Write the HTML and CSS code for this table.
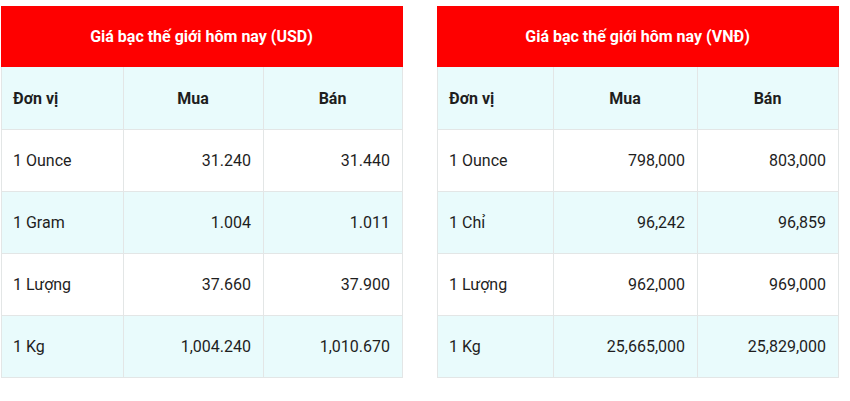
FILE: index.html
```html
<!DOCTYPE html>
<html lang="vi">
<head>
<meta charset="utf-8">
<title>Giá bạc thế giới</title>
<link rel="stylesheet" href="styles.css">
</head>
<body>
<div class="wrap">
  <table class="price usd">
    <colgroup><col class="c1"><col class="c2"><col class="c3"></colgroup>
    <thead>
      <tr class="title"><th colspan="3">Giá bạc thế giới hôm nay (USD)</th></tr>
      <tr class="head"><th class="unit">Đơn vị</th><th>Mua</th><th>Bán</th></tr>
    </thead>
    <tbody>
      <tr><td class="unit">1 Ounce</td><td>31.240</td><td>31.440</td></tr>
      <tr class="alt"><td class="unit">1 Gram</td><td>1.004</td><td>1.011</td></tr>
      <tr><td class="unit">1 Lượng</td><td>37.660</td><td>37.900</td></tr>
      <tr class="alt"><td class="unit">1 Kg</td><td>1,004.240</td><td>1,010.670</td></tr>
    </tbody>
  </table>
  <table class="price vnd">
    <colgroup><col class="c1"><col class="c2"><col class="c3"></colgroup>
    <thead>
      <tr class="title"><th colspan="3">Giá bạc thế giới hôm nay (VNĐ)</th></tr>
      <tr class="head"><th class="unit">Đơn vị</th><th>Mua</th><th>Bán</th></tr>
    </thead>
    <tbody>
      <tr><td class="unit">1 Ounce</td><td>798,000</td><td>803,000</td></tr>
      <tr class="alt"><td class="unit">1 Chỉ</td><td>96,242</td><td>96,859</td></tr>
      <tr><td class="unit">1 Lượng</td><td>962,000</td><td>969,000</td></tr>
      <tr class="alt"><td class="unit">1 Kg</td><td>25,665,000</td><td>25,829,000</td></tr>
    </tbody>
  </table>
</div>
</body>
</html>
```
FILE: styles.css
```css
html, body {
  margin: 0;
  padding: 0;
  background: #ffffff;
}
body {
  font-family: Roboto, "Liberation Sans", Arial, sans-serif;
  color: #1e1e1e;
}
.wrap {
  display: flex;
  gap: 34px;
  padding: 6px 0 0 1px;
}
.price {
  border-collapse: collapse;
  table-layout: fixed;
}
.usd { width: 401px; }
.usd .c1 { width: 122px; }
.usd .c2 { width: 140px; }
.usd .c3 { width: 139px; }
.vnd { width: 401px; }
.vnd .c1 { width: 116px; }
.vnd .c2 { width: 144px; }
.vnd .c3 { width: 141px; }

.price th, .price td {
  border: 1px solid #e3e6e6;
  padding: 0 12px 0 11px;
  font-size: 16px;
  vertical-align: middle;
}
.title th {
  background: #fe0000;
  color: #ffffff;
  font-weight: 700;
  height: 60px;
  border-color: #fe0000;
  text-align: center;
  box-sizing: border-box;
}
.head th {
  background: #e9fbfc;
  font-weight: 700;
  height: 63px;
  text-align: center;
  box-sizing: border-box;
}
.price td {
  height: 62px;
  text-align: right;
  font-weight: 400;
  box-sizing: border-box;
}
.price .unit { text-align: left; }
.alt td { background: #e9fbfc; }
```
